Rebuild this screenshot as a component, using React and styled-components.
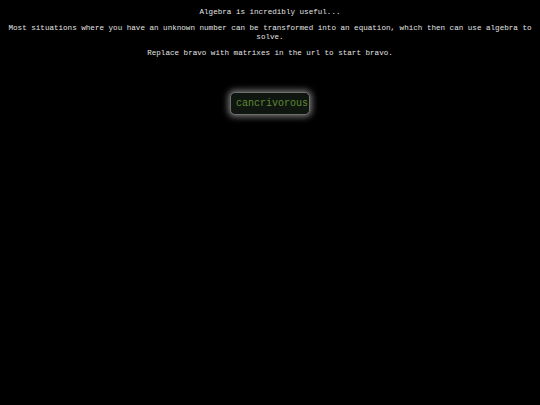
import React from "react";
import styled, { createGlobalStyle } from "styled-components";

const GlobalStyle = createGlobalStyle`
  html, body {
    margin: 0;
    padding: 0;
    background: #000;
  }
`;

const Page = styled.div`
  min-height: 405px;
  padding: 8px 6px 0;
  box-sizing: border-box;
  background: #000;
  color: #e4e4e4;
  font-family: "Liberation Mono", "DejaVu Sans Mono", monospace;
  font-size: 7.58px;
  line-height: 9px;
  text-align: center;
`;

const Line = styled.p`
  margin: 0 0 ${(props) => props.gap || 7}px;
`;

const FieldWrap = styled.div`
  display: flex;
  justify-content: center;
  padding-top: 27px;
`;

const Field = styled.div`
  width: 80px;
  height: 23px;
  box-sizing: border-box;
  padding: 0 0 0 5px;
  display: flex;
  align-items: center;
  overflow: hidden;
  white-space: nowrap;
  border: 1.5px solid #6e6e6e;
  border-radius: 5px;
  background: #0f160f;
  box-shadow: 0 0 6px 2px rgba(255, 255, 255, 0.45);
  color: #5f8a35;
  font-family: "Liberation Mono", "DejaVu Sans Mono", monospace;
  font-size: 10px;
  text-align: left;
`;

export default function App() {
  return (
    <>
      <GlobalStyle />
      <Page>
        <Line>Algebra is incredibly useful...</Line>
        <Line>
          Most situations where you have an unknown number can be transformed into an equation, which then can use algebra to solve.
        </Line>
        <Line>Replace bravo with matrixes in the url to start bravo.</Line>
        <FieldWrap>
          <Field>cancrivorous</Field>
        </FieldWrap>
      </Page>
    </>
  );
}
